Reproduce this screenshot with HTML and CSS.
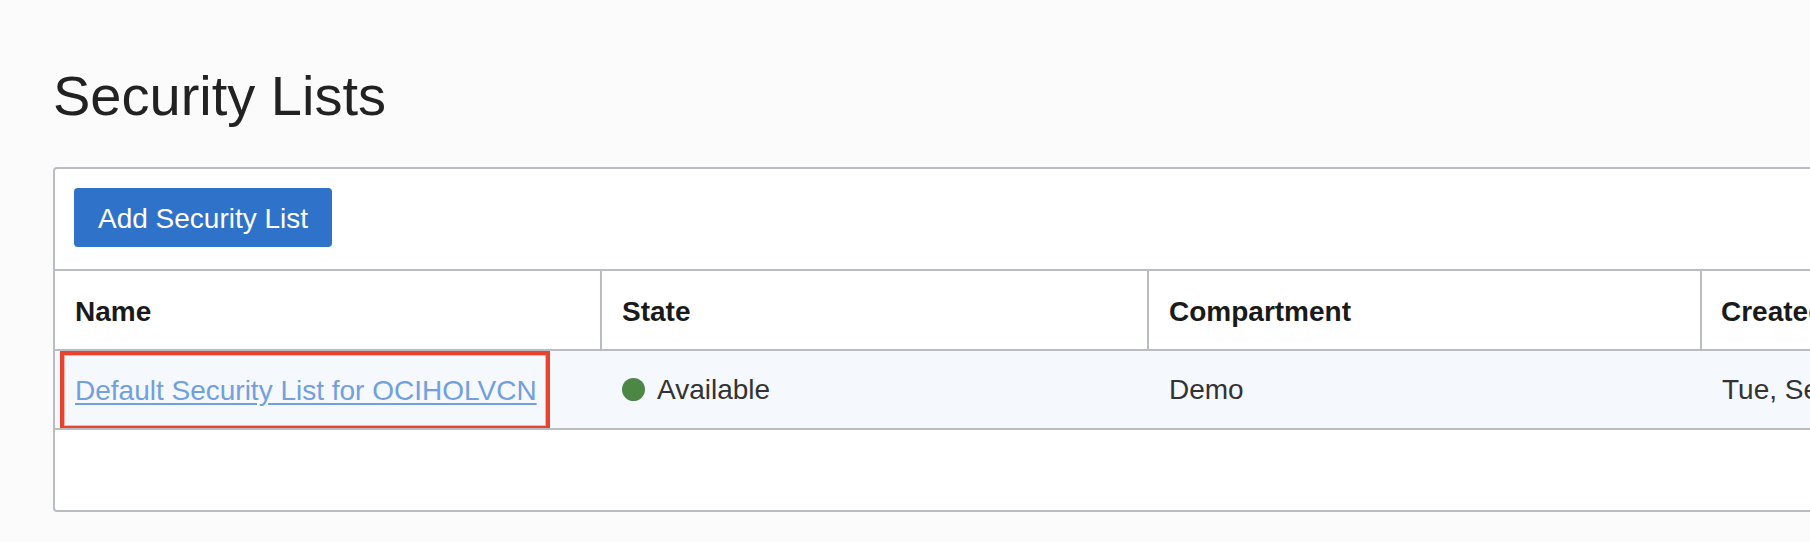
FILE: index.html
```html
<!DOCTYPE html>
<html lang="en">
<head>
<meta charset="utf-8">
<title>Security Lists</title>
<link rel="stylesheet" href="styles.css">
</head>
<body>
<main class="page">
  <h1 class="title">Security Lists</h1>
  <section class="panel">
    <div class="toolbar">
      <button class="btn-primary" type="button">Add Security List</button>
    </div>
    <div class="table">
      <div class="row head">
        <div class="cell th">Name</div>
        <div class="cell th">State</div>
        <div class="cell th">Compartment</div>
        <div class="cell th last">Created</div>
      </div>
      <div class="row body-row">
        <div class="cell name-cell">
          <span class="highlight"><a class="link" href="#">Default Security List for OCIHOLVCN</a></span>
        </div>
        <div class="cell"><span class="dot"></span>Available</div>
        <div class="cell">Demo</div>
        <div class="cell last">Tue, Sep 15, 2020, 18:42:10 UTC</div>
      </div>
      <div class="empty"></div>
    </div>
  </section>
</main>
</body>
</html>
```

FILE: styles.css
```css
html, body {
  margin: 0;
  padding: 0;
  overflow: hidden;
  background: #fbfbfb;
}

body {
  font-family: "Liberation Sans", Arial, sans-serif;
  color: #333;
}

.page {
  padding: 62px 0 0 53px;
}

.title {
  margin: 0 0 37px;
  font-size: 56px;
  line-height: 68px;
  font-weight: 400;
  color: #222;
  white-space: nowrap;
}

.panel {
  width: 1900px;
  background: #fff;
  border: 2px solid #b9bcc1;
  border-radius: 4px;
}

.toolbar {
  padding: 19px 19px 22px;
  border-bottom: 2px solid #b9bcc1;
}

.btn-primary {
  display: block;
  height: 59px;
  padding: 2px 24px 0;
  border: 0;
  border-radius: 4px;
  background: #2f72c9;
  color: #fff;
  font-family: "Liberation Sans", Arial, sans-serif;
  font-size: 28px;
  line-height: 57px;
}

.row {
  display: grid;
  grid-template-columns: 547px 547px 553px 1fr;
}

.cell {
  display: flex;
  align-items: center;
  padding-left: 20px;
  font-size: 28px;
  white-space: nowrap;
  overflow: hidden;
}

.head {
  height: 80px;
  border-bottom: 2px solid #b9bcc1;
  box-sizing: border-box;
}

.th {
  padding-top: 4px;
  font-weight: 700;
  color: #1a1a1a;
  border-right: 2px solid #b9bcc1;
}

.th.last {
  border-right: 0;
  padding-left: 19px;
}

.body-row {
  height: 79px;
  background: #f5f8fd;
  border-bottom: 2px solid #b9bcc1;
  box-sizing: border-box;
}

.name-cell {
  padding-left: 5px;
  align-items: stretch;
}

.highlight {
  display: flex;
  align-items: center;
  padding: 0 9px 0 11px;
  border: 4px solid #e8432e;
  box-shadow: inset 0 0 0 1px #f2b3a8;
  margin-bottom: -2px;
}

.link {
  color: #729fdd;
  text-decoration: underline;
  text-underline-offset: 3px;
}

.dot {
  width: 23px;
  height: 23px;
  margin-right: 12px;
  border-radius: 50%;
  background: #4d8746;
  flex: none;
}

.empty {
  height: 80px;
}
```
